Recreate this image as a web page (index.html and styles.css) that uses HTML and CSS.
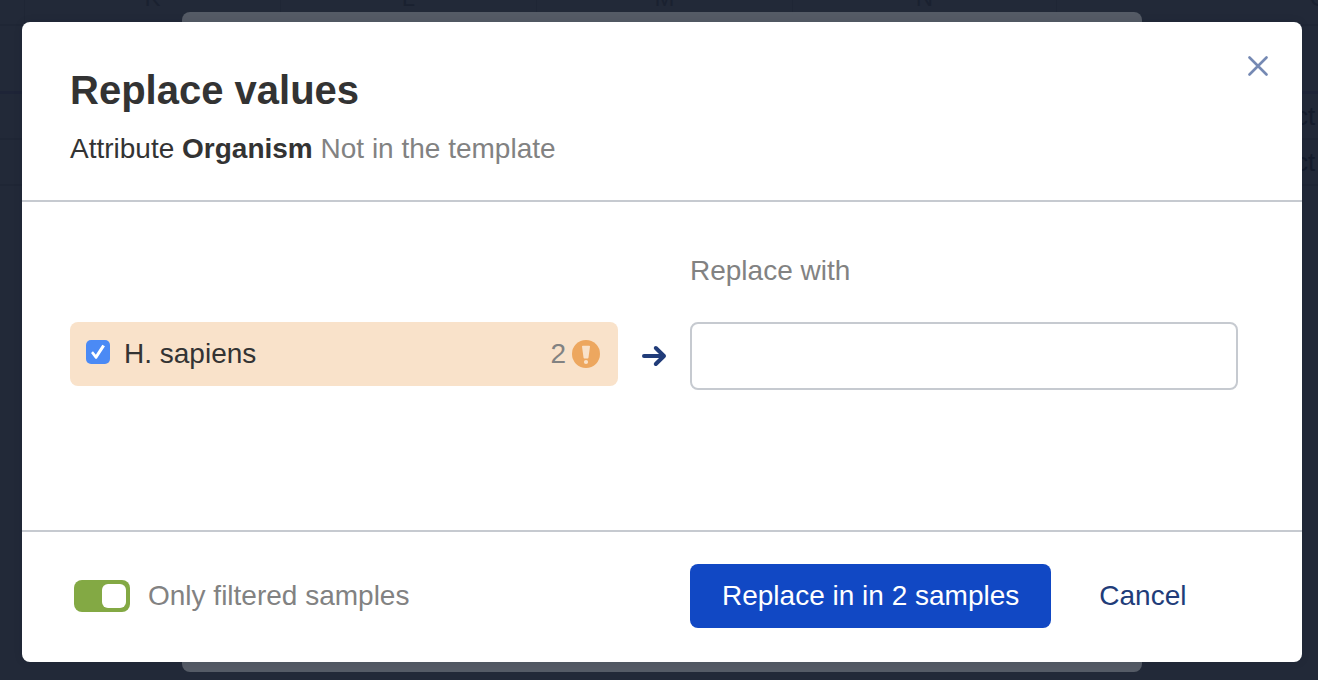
FILE: index.html
```
<!DOCTYPE html>
<html lang="en">
<head>
<meta charset="utf-8">
<title>Replace values</title>
<link rel="stylesheet" href="styles.css">
</head>
<body>
<div class="backdrop" aria-hidden="true">
  <table class="sheet">
    <thead>
      <tr><th class="edge"></th><th class="col">K</th><th class="col">L</th><th class="col">M</th><th class="col-wide">N</th><th>O</th></tr>
    </thead>
    <tbody>
      <tr class="filters"><td></td><td></td><td></td><td></td><td></td><td></td></tr>
      <tr><td></td><td></td><td></td><td></td><td></td><td class="value">ct</td></tr>
      <tr><td></td><td></td><td></td><td></td><td></td><td class="value">ct</td></tr>
    </tbody>
  </table>
  <div class="previous-dialog"></div>
</div>
<form class="dialog" role="dialog" aria-labelledby="dialog-title">
  <header class="dialog-header">
    <div>
      <h1 class="title" id="dialog-title">Replace values</h1>
      <p class="subtitle">Attribute <strong>Organism</strong> <span class="muted">Not in the template</span></p>
    </div>
    <button class="close" type="button" aria-label="Close">
      <svg width="20" height="20" viewBox="0 0 20 20" aria-hidden="true"><path d="M1.5 1.5 18.5 18.5M18.5 1.5 1.5 18.5"/></svg>
    </button>
  </header>
  <main class="dialog-body">
    <label class="field-label" for="replacement">Replace with</label>
    <label class="item">
      <input class="checkbox" type="checkbox" checked>
      <span class="item-name">H. sapiens</span>
      <span class="muted">2</span>
      <svg class="warning" width="28" height="28" viewBox="0 0 28 28" aria-hidden="true"><circle cx="14" cy="14" r="14"/><path d="M10 6.6q0-.8.8-.8h6.4q.8 0 .8.8l-1.5 11q-.1.9-.9.9h-3.2q-.8 0-.9-.9z"/><circle class="dot" cx="14" cy="22" r="2.1"/></svg>
    </label>
    <svg class="arrow" width="26" height="22" viewBox="0 0 26 22" aria-hidden="true"><path d="M3 11H23M14.8 3 23 11 14.8 19"/></svg>
    <input class="text-input" id="replacement" type="text">
  </main>
  <footer class="dialog-footer">
    <label class="toggle-label"><input class="toggle" type="checkbox" role="switch" checked>Only filtered samples</label>
    <div class="actions">
      <button class="primary" type="submit">Replace in in 2 samples</button>
      <button class="cancel" type="button">Cancel</button>
    </div>
  </footer>
</form>
</body>
</html>
```
FILE: styles.css
```
* {
  box-sizing: border-box;
}

body {
  margin: 0;
  padding: 22px 16px 18px 22px;
  background: #222938;
  color: #333;
  font: 28px/32px "Liberation Sans", Arial, sans-serif;
}

button,
input {
  margin: 0;
  padding: 0;
  border: 0;
  background: none;
  font: inherit;
}

/* Dimmed spreadsheet behind the dialog */
.backdrop {
  position: absolute;
  inset: 0;
  overflow: hidden;
}

.sheet {
  width: 1582px;
  margin-top: -20px;
  border-collapse: separate;
  border-spacing: 0;
  table-layout: fixed;
  color: #151c2c;
  font-size: 26px;
}

.sheet th,
.sheet td {
  height: 46px;
  padding: 0;
  border-right: 1px solid #1f2635;
  border-bottom: 2px solid #1f2635;
}

.sheet th {
  padding-bottom: 8px;
  color: #1a2130;
  font-size: 24px;
  font-weight: 400;
}

.sheet .filters td {
  height: 68px;
  border-bottom: 3px solid #1e2437;
}

.sheet .edge {
  width: 25px;
}

.sheet .col {
  width: 256px;
}

.sheet .col-wide {
  width: 264px;
}

.sheet .value {
  padding-left: 238px;
}

.previous-dialog {
  position: absolute;
  inset: 12px 176px 8px 182px;
  border-radius: 8px;
  background: #555b66;
}

/* Dialog */
.dialog {
  position: relative;
  border-radius: 8px;
  background: #fff;
  box-shadow: 0 0 8px rgba(20, 26, 38, 0.12);
}

.dialog-header {
  display: flex;
  justify-content: space-between;
  align-items: flex-start;
  padding: 44px 32px 35px 48px;
  border-bottom: 2px solid #c6cad0;
}

.title {
  margin: 0 0 19px;
  font-size: 40px;
  line-height: 48px;
}

.subtitle {
  margin: 0;
}

.muted {
  color: #828282;
}

.close {
  display: flex;
  margin-top: -10px;
  padding: 0 2px;
}

.close svg {
  fill: none;
  stroke: #7589b3;
  stroke-width: 2.6;
  stroke-linecap: round;
}

.dialog-body {
  display: grid;
  grid-template-columns: 1fr 72px 1fr;
  row-gap: 35px;
  padding: 53px 64px 140px 48px;
}

.field-label {
  grid-column: 3;
  color: #828282;
}

.item {
  display: flex;
  align-items: center;
  align-self: start;
  grid-column: 1;
  height: 64px;
  padding: 0 18px 0 16px;
  border-radius: 8px;
  background: #f9e2ca;
}

.checkbox {
  width: 24px;
  height: 24px;
  margin: 0 14px 4px 0;
  appearance: none;
  border-radius: 5px;
  background: #4b8af5;
}

.checkbox:checked::before {
  content: "";
  display: block;
  height: 24px;
  background: #fff;
  clip-path: polygon(21% 54%, 29% 47%, 41% 61%, 68% 20%, 79% 26%, 45% 78%, 39% 78%);
}

.item-name {
  flex: 1;
}

.warning {
  margin-left: 6px;
  fill: #eda75f;
}

.warning path,
.warning .dot {
  fill: #f9e2ca;
}

.arrow {
  place-self: center;
  fill: none;
  stroke: #213c79;
  stroke-width: 4;
  stroke-linecap: round;
  stroke-linejoin: round;
}

.text-input {
  width: 100%;
  height: 68px;
  padding: 0 16px;
  border: 2px solid #c6cad0;
  border-radius: 8px;
}

.dialog-footer {
  display: grid;
  grid-template-columns: 1fr 1fr;
  column-gap: 72px;
  align-items: center;
  padding: 32px 64px 34px 48px;
  border-top: 2px solid #c6cad0;
}

.toggle-label {
  display: flex;
  align-items: center;
  gap: 18px;
  padding-left: 4px;
  color: #828282;
}

.toggle {
  width: 56px;
  height: 32px;
  padding: 4px;
  appearance: none;
  border-radius: 8px;
  background: #83a944;
}

.toggle::before {
  content: "";
  display: block;
  width: 24px;
  height: 24px;
  border-radius: 6px;
  background: #fff;
}

.toggle:checked::before {
  margin-left: auto;
}

.actions {
  display: flex;
  gap: 48px;
}

.primary {
  height: 64px;
  padding: 0 32px;
  border-radius: 8px;
  background: #1148c4;
  color: #fff;
  white-space: nowrap;
}

.cancel {
  color: #213c79;
}
```
